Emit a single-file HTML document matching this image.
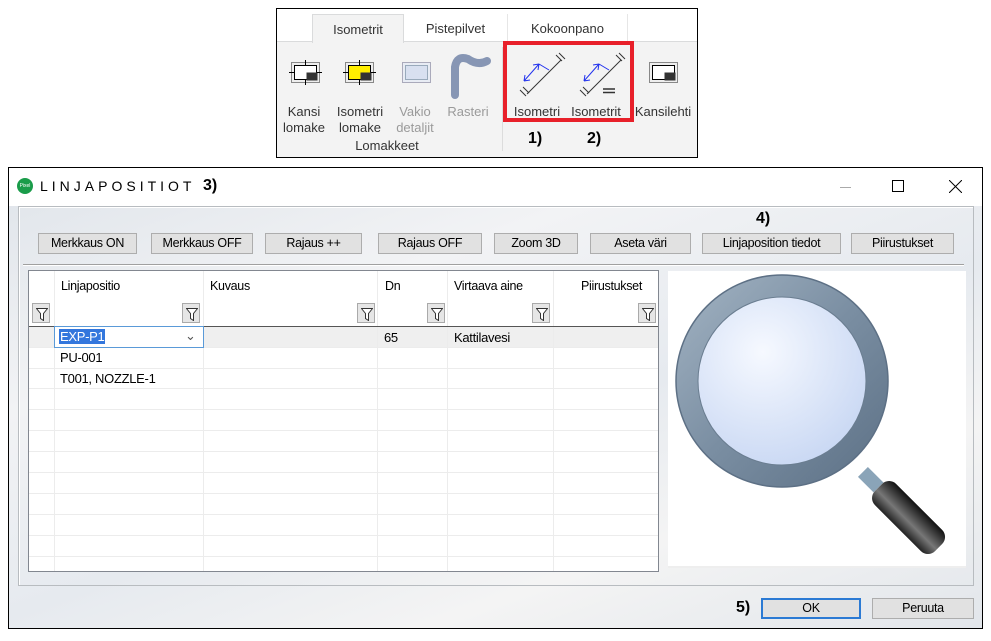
<!DOCTYPE html>
<html><head><meta charset="utf-8"><style>
*{box-sizing:border-box;margin:0;padding:0}
body{width:991px;height:641px;background:#fff;position:relative;overflow:hidden;font-family:"Liberation Sans",sans-serif;font-size:12px;color:#000}
.a{position:absolute}
.rib{left:276px;top:8px;width:422px;height:150px;border:1px solid #000;background:#f3f3f3}
.tabbar{left:0;top:0;width:420px;height:33px;background:#fff;border-bottom:1px solid #dadbdc}
.tab{top:5px;height:28px;font-size:13px;color:#333;text-align:center;line-height:30px}
.lbl{font-size:13px;color:#333;text-align:center;line-height:16px}
.gray{color:#9a9a9a}
.win{left:8px;top:167px;width:975px;height:462px;border:1px solid #000;background:linear-gradient(160deg,#dfe4ea 0%,#f2f3f5 30%,#e6eaef 55%,#f4f4f4 75%,#e2e6eb 100%)}
.title{left:0;top:0;width:973px;height:38px;background:#fff}
.btn{height:21px;background:#e1e1e1;border:1px solid #adadad;text-align:center;line-height:19px;font-size:12.5px;letter-spacing:-.3px}
.grid{left:19px;top:102px;width:631px;height:302px;border:1px solid #828790;background:#fff;overflow:hidden}
.vl{position:absolute;top:0;width:1px;height:300px;background:#ececec}
.hl{position:absolute;left:0;width:630px;height:1px;background:#ececec}
.flt{position:absolute;width:18px;height:20px;background:#e6e6e6;border:1px solid #aaa}
.flt svg{position:absolute;left:3px;top:3px}
.hd{position:absolute;top:8px;font-size:12.5px;letter-spacing:-.3px}
.cell{position:absolute;font-size:13px;letter-spacing:-.3px}
.num{font-weight:bold;font-size:16px;font-family:"Liberation Sans",sans-serif}
</style></head><body>

<div class="a rib">
 <div class="a tabbar"></div>
 <div class="a tab" style="left:35px;width:92px;background:#f3f3f3;border:1px solid #dadbdc;border-bottom:none;height:29px">Isometrit</div>
 <div class="a tab" style="left:127px;width:104px;border-right:1px solid #e6e6e6">Pistepilvet</div>
 <div class="a tab" style="left:231px;width:120px;border-right:1px solid #e6e6e6">Kokoonpano</div>
 <div class="a" style="left:225px;top:38px;width:1px;height:104px;background:#dcdcdc"></div>
 <svg class="a" style="left:0;top:40px" width="420" height="50">
  <g fill="none" stroke="#333" stroke-width="1">
   <rect x="14.5" y="13.5" width="28" height="20" fill="#eee" stroke="#888"/><rect x="17.5" y="16.5" width="22" height="14" fill="#fff" stroke="#000"/><rect x="30" y="24" width="10" height="7" fill="#333"/>
   <path d="M28.5 11v5M28.5 31v5M12 23.5h5M40 23.5h5" stroke="#000"/>
   <rect x="68.5" y="13.5" width="28" height="20" fill="#eee" stroke="#888"/><rect x="71.5" y="16.5" width="22" height="14" fill="#ffee00" stroke="#000"/><rect x="84" y="24" width="10" height="7" fill="#333"/>
   <path d="M82.5 11v5M82.5 31v5M66 23.5h5M94 23.5h5" stroke="#000"/>
   <rect x="125.5" y="13.5" width="28" height="20" fill="#e8ecf4" stroke="#aab"/><rect x="128.5" y="16.5" width="22" height="14" fill="#d8e0f0" stroke="#9ab"/>
   <path d="M178 46 L178 18 Q180 6 191 10 Q201 17 210 12" stroke="#8796b4" stroke-width="8" stroke-linecap="round"/>
   <g transform="translate(240,4)"><path d="M10 41 L44 7" stroke="#333"/><path d="M3 37l6 6M6 34l6 6M39 2l6 6M42 0l6 6" stroke="#333"/><path d="M7 28 L22 11 M7 28l1-6M7 28l6-1M22 11l-6 1M22 11l-1 6M22 11l10 6" stroke="#2233ee"/></g>
   <g transform="translate(300,4)"><path d="M10 41 L44 7" stroke="#333"/><path d="M3 37l6 6M6 34l6 6M39 2l6 6M42 0l6 6" stroke="#333"/><path d="M7 28 L22 11 M7 28l1-6M7 28l6-1M22 11l-6 1M22 11l-1 6M22 11l10 6" stroke="#2233ee"/><path d="M26 36h12M26 39.5h12" stroke="#333" stroke-width="1.5"/></g>
   <rect x="372.5" y="13.5" width="28" height="20" fill="#eee" stroke="#888"/><rect x="375.5" y="16.5" width="22" height="14" fill="#fff" stroke="#000"/><rect x="388" y="24" width="10" height="7" fill="#333"/>
  </g>
 </svg>
 <div class="a lbl" style="left:2px;top:95px;width:50px">Kansi<br>lomake</div>
 <div class="a lbl" style="left:55px;top:95px;width:56px">Isometri<br>lomake</div>
 <div class="a lbl gray" style="left:113px;top:95px;width:50px">Vakio<br>detaljit</div>
 <div class="a lbl gray" style="left:166px;top:95px;width:50px">Rasteri</div>
 <div class="a lbl" style="left:230px;top:95px;width:60px">Isometri</div>
 <div class="a lbl" style="left:288px;top:95px;width:62px">Isometrit</div>
 <div class="a lbl" style="left:352px;top:95px;width:68px">Kansilehti</div>
 <div class="a lbl" style="left:60px;top:129px;width:100px">Lomakkeet</div>
 <div class="a" style="left:226px;top:32px;width:131px;height:81px;border:4px solid #e8202a"></div>
 <div class="a num" style="left:251px;top:121px">1)</div>
 <div class="a num" style="left:310px;top:121px">2)</div>
</div>

<div class="a win">
 <div class="a title">
  <div class="a" style="left:8px;top:10px;width:16px;height:16px;border-radius:50%;background:#1a9c4a;color:#fff;font-size:5px;text-align:center;line-height:16px">Pixel</div>
  <div class="a" style="left:31px;top:10px;font-size:14px;letter-spacing:4px">LINJAPOSITIOT</div>
  <div class="a num" style="left:194px;top:9px">3)</div>
  <div class="a" style="left:831px;top:19px;width:11px;height:1px;background:#aaa"></div>
  <div class="a" style="left:883px;top:12px;width:12px;height:12px;border:1px solid #000"></div>
  <svg class="a" style="left:940px;top:12px" width="13" height="13"><path d="M0 0L13 13M13 0L0 13" stroke="#000"/></svg>
 </div>
 <div class="a" style="left:9px;top:38px;width:956px;height:380px;border:1px solid #b8bcc0;box-shadow:inset 1px 1px 0 #fff"></div>
 <div class="a btn" style="left:29px;top:65px;width:99px">Merkkaus ON</div>
 <div class="a btn" style="left:142px;top:65px;width:102px">Merkkaus OFF</div>
 <div class="a btn" style="left:256px;top:65px;width:97px">Rajaus ++</div>
 <div class="a btn" style="left:369px;top:65px;width:104px">Rajaus OFF</div>
 <div class="a btn" style="left:485px;top:65px;width:84px">Zoom 3D</div>
 <div class="a btn" style="left:581px;top:65px;width:101px">Aseta väri</div>
 <div class="a btn" style="left:693px;top:65px;width:139px">Linjaposition tiedot</div>
 <div class="a btn" style="left:842px;top:65px;width:103px">Piirustukset</div>
 <div class="a num" style="left:747px;top:42px">4)</div>
 <div class="a" style="left:14px;top:96px;width:941px;height:2px;border-top:1px solid #a0a0a0;border-bottom:1px solid #fff"></div>

 <div class="a grid">
  <div class="a" style="left:0;top:56px;width:630px;height:20px;background:#efefef"></div>
  <div class="vl" style="left:25px"></div><div class="vl" style="left:174px"></div><div class="vl" style="left:348px"></div><div class="vl" style="left:418px"></div><div class="vl" style="left:524px"></div>
  <div class="hl" style="top:55px;background:#555"></div>
  <div class="hl" style="top:76px"></div><div class="hl" style="top:97px"></div><div class="hl" style="top:117px"></div><div class="hl" style="top:138px"></div><div class="hl" style="top:159px"></div><div class="hl" style="top:180px"></div><div class="hl" style="top:201px"></div><div class="hl" style="top:222px"></div><div class="hl" style="top:243px"></div><div class="hl" style="top:264px"></div><div class="hl" style="top:285px"></div>
  <div class="hd" style="left:32px">Linjapositio</div>
  <div class="hd" style="left:181px">Kuvaus</div>
  <div class="hd" style="left:356px">Dn</div>
  <div class="hd" style="left:425px">Virtaava aine</div>
  <div class="hd" style="left:552px">Piirustukset</div>
  <div class="flt" style="left:3px;top:32px"><svg width="12" height="14"><path d="M0.5 1.5h11l-4 5v7l-3-2v-5z" fill="#fff" stroke="#333"/></svg></div>
  <div class="flt" style="left:153px;top:32px"><svg width="12" height="14"><path d="M0.5 1.5h11l-4 5v7l-3-2v-5z" fill="#fff" stroke="#333"/></svg></div>
  <div class="flt" style="left:328px;top:32px"><svg width="12" height="14"><path d="M0.5 1.5h11l-4 5v7l-3-2v-5z" fill="#fff" stroke="#333"/></svg></div>
  <div class="flt" style="left:398px;top:32px"><svg width="12" height="14"><path d="M0.5 1.5h11l-4 5v7l-3-2v-5z" fill="#fff" stroke="#333"/></svg></div>
  <div class="flt" style="left:503px;top:32px"><svg width="12" height="14"><path d="M0.5 1.5h11l-4 5v7l-3-2v-5z" fill="#fff" stroke="#333"/></svg></div>
  <div class="flt" style="left:609px;top:32px"><svg width="12" height="14"><path d="M0.5 1.5h11l-4 5v7l-3-2v-5z" fill="#fff" stroke="#333"/></svg></div>
  <div class="a" style="left:25px;top:55px;width:150px;height:22px;border:1px solid #5a9ad8;background:#fff"></div>
  <div class="cell" style="left:30px;top:58px;background:#3377dd;color:#fff;padding:0 1px">EXP-P1</div>
  <div class="cell" style="left:156px;top:57px;color:#555">&#8964;</div>
  <div class="cell" style="left:355px;top:59px">65</div>
  <div class="cell" style="left:425px;top:59px">Kattilavesi</div>
  <div class="cell" style="left:31px;top:79px">PU-001</div>
  <div class="cell" style="left:31px;top:100px">T001, NOZZLE-1</div>
 </div>

 <div class="a" style="left:659px;top:103px;width:298px;height:297px;background:#fff;border-bottom:2px solid #eee"></div>
 <svg class="a" style="left:659px;top:103px" width="298" height="297">
  <defs>
   <radialGradient id="gl" cx=".4" cy=".35" r=".7"><stop offset="0" stop-color="#f6f9ff"/><stop offset="1" stop-color="#c4d4f2"/></radialGradient>
   <linearGradient id="hn" x1="0" y1="0" x2="1" y2="0"><stop offset="0" stop-color="#222"/><stop offset=".4" stop-color="#777"/><stop offset="1" stop-color="#111"/></linearGradient>
   <linearGradient id="rg" x1="0" y1="0" x2="1" y2="1"><stop offset="0" stop-color="#9fb0c0"/><stop offset=".5" stop-color="#7a8ea2"/><stop offset="1" stop-color="#5f7388"/></linearGradient>
  </defs>
  <g transform="translate(202,208) rotate(-45)"><rect x="-7" y="-10" width="14" height="22" fill="#8aa4b8"/><rect x="-15" y="12" width="30" height="85" rx="10" fill="url(#hn)"/></g>
  <circle cx="114" cy="110" r="96" fill="url(#gl)"/>
  <circle cx="114" cy="110" r="95" fill="none" stroke="url(#rg)" stroke-width="22"/>
  <circle cx="114" cy="110" r="106" fill="none" stroke="#5d7085" stroke-width="1.5"/>
  <circle cx="114" cy="110" r="84" fill="none" stroke="#6a7d90" stroke-width="1"/>
 </svg>

 <div class="a num" style="left:727px;top:431px">5)</div>
 <div class="a btn" style="left:752px;top:430px;width:100px;border:2px solid #2b7ad4;line-height:17px">OK</div>
 <div class="a btn" style="left:863px;top:430px;width:102px">Peruuta</div>
</div>
</body></html>
